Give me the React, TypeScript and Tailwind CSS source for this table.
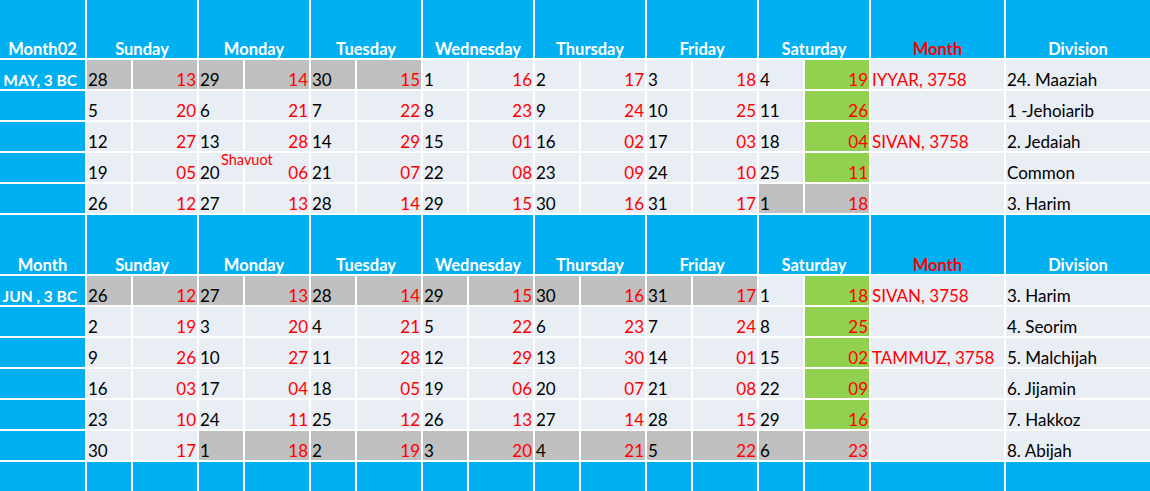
import React from "react";

type Shade = "n" | "g" | "s";
type Day = [number, string, Shade?];

interface Week {
  label: string;
  days: Day[];
  month: string;
  division: string;
  note?: string;
}

interface Block {
  title: string;
  weeks: Week[];
}

const DAYS = ["Sunday", "Monday", "Tuesday", "Wednesday", "Thursday", "Friday", "Saturday"];

const blocks: Block[] = [
  {
    title: "Month02",
    weeks: [
      {
        label: "MAY, 3 BC",
        days: [[28, "13", "g"], [29, "14", "g"], [30, "15", "g"], [1, "16"], [2, "17"], [3, "18"], [4, "19", "s"]],
        month: "IYYAR, 3758",
        division: "24. Maaziah",
      },
      {
        label: "",
        days: [[5, "20"], [6, "21"], [7, "22"], [8, "23"], [9, "24"], [10, "25"], [11, "26", "s"]],
        month: "",
        division: "1 -Jehoiarib",
      },
      {
        label: "",
        days: [[12, "27"], [13, "28"], [14, "29"], [15, "01"], [16, "02"], [17, "03"], [18, "04", "s"]],
        month: "SIVAN, 3758",
        division: "2. Jedaiah",
      },
      {
        label: "",
        days: [[19, "05"], [20, "06"], [21, "07"], [22, "08"], [23, "09"], [24, "10"], [25, "11", "s"]],
        month: "",
        division: "Common",
        note: "Shavuot",
      },
      {
        label: "",
        days: [[26, "12"], [27, "13"], [28, "14"], [29, "15"], [30, "16"], [31, "17"], [1, "18", "g"]],
        month: "",
        division: "3. Harim",
      },
    ],
  },
  {
    title: "Month",
    weeks: [
      {
        label: "JUN , 3 BC",
        days: [[26, "12", "g"], [27, "13", "g"], [28, "14", "g"], [29, "15", "g"], [30, "16", "g"], [31, "17", "g"], [1, "18", "s"]],
        month: "SIVAN, 3758",
        division: "3. Harim",
      },
      {
        label: "",
        days: [[2, "19"], [3, "20"], [4, "21"], [5, "22"], [6, "23"], [7, "24"], [8, "25", "s"]],
        month: "",
        division: "4. Seorim",
      },
      {
        label: "",
        days: [[9, "26"], [10, "27"], [11, "28"], [12, "29"], [13, "30"], [14, "01"], [15, "02", "s"]],
        month: "TAMMUZ, 3758",
        division: "5. Malchijah",
      },
      {
        label: "",
        days: [[16, "03"], [17, "04"], [18, "05"], [19, "06"], [20, "07"], [21, "08"], [22, "09", "s"]],
        month: "",
        division: "6. Jijamin",
      },
      {
        label: "",
        days: [[23, "10"], [24, "11"], [25, "12"], [26, "13"], [27, "14"], [28, "15"], [29, "16", "s"]],
        month: "",
        division: "7. Hakkoz",
      },
      {
        label: "",
        days: [[30, "17"], [1, "18", "g"], [2, "19", "g"], [3, "20", "g"], [4, "21", "g"], [5, "22", "g"], [6, "23", "g"]],
        month: "",
        division: "8. Abijah",
      },
    ],
  },
];

function HeaderRow({ title }: { title: string }) {
  const cell = "bg-[#00b0f0] flex items-end justify-center pb-[1px] font-bold text-[16.5px] whitespace-nowrap";
  return (
    <>
      <div className={`${cell} text-white`}>{title}</div>
      {DAYS.map((d) => (
        <div key={d} className={`${cell} col-span-2 text-white`}>
          {d}
        </div>
      ))}
      <div className={`${cell} text-[#ff0000]`}>Month</div>
      <div className={`${cell} text-white`}>Division</div>
    </>
  );
}

function WeekRow({ week }: { week: Week }) {
  return (
    <>
      <div className="bg-[#00b0f0] flex items-end justify-end whitespace-nowrap pr-[8px] pb-[1px] font-bold text-[15.5px] text-white">
        {week.label}
      </div>
      {week.days.map(([greg, heb, shade = "n"], i) => {
        const left = shade === "g" ? "bg-[#bfbfbf]" : "bg-[#e9edf4]";
        const right = shade === "g" ? "bg-[#bfbfbf]" : shade === "s" ? "bg-[#92d050]" : "bg-[#e9edf4]";
        return (
          <React.Fragment key={i}>
            <div className={`${left} relative flex items-end pl-[1px] pb-[1px] text-black`}>
              {greg}
              {week.note && i === 1 && (
                <span className="absolute left-[22px] top-[0px] text-[14.5px] whitespace-nowrap text-[#ff0000]">
                  {week.note}
                </span>
              )}
            </div>
            <div className={`${right} flex items-end justify-end pr-[1px] pb-[1px] text-[#ff0000]`}>{heb}</div>
          </React.Fragment>
        );
      })}
      <div className="bg-[#e9edf4] flex items-end pl-[1px] pb-[1px] whitespace-nowrap text-[#ff0000]">{week.month}</div>
      <div className="bg-[#e9edf4] flex items-end pl-[1px] pb-[1px] whitespace-nowrap text-black">{week.division}</div>
    </>
  );
}

export default function App() {
  return (
    <div
      className="w-[1150px] h-[491px] overflow-hidden bg-white grid gap-[2px] grid-cols-[85px_repeat(7,44px_64px)_133px_144px] grid-rows-[58px_repeat(5,29px)_59px_repeat(6,29px)_29px] text-[17px] leading-none"
      style={{ fontFamily: "Lato, 'Noto Sans', sans-serif" }}
    >
      {blocks.map((b) => (
        <React.Fragment key={b.title}>
          <HeaderRow title={b.title} />
          {b.weeks.map((w, i) => (
            <WeekRow key={i} week={w} />
          ))}
        </React.Fragment>
      ))}
      {Array.from({ length: 17 }).map((_, i) => (
        <div key={i} className="bg-[#00b0f0]" />
      ))}
    </div>
  );
}
